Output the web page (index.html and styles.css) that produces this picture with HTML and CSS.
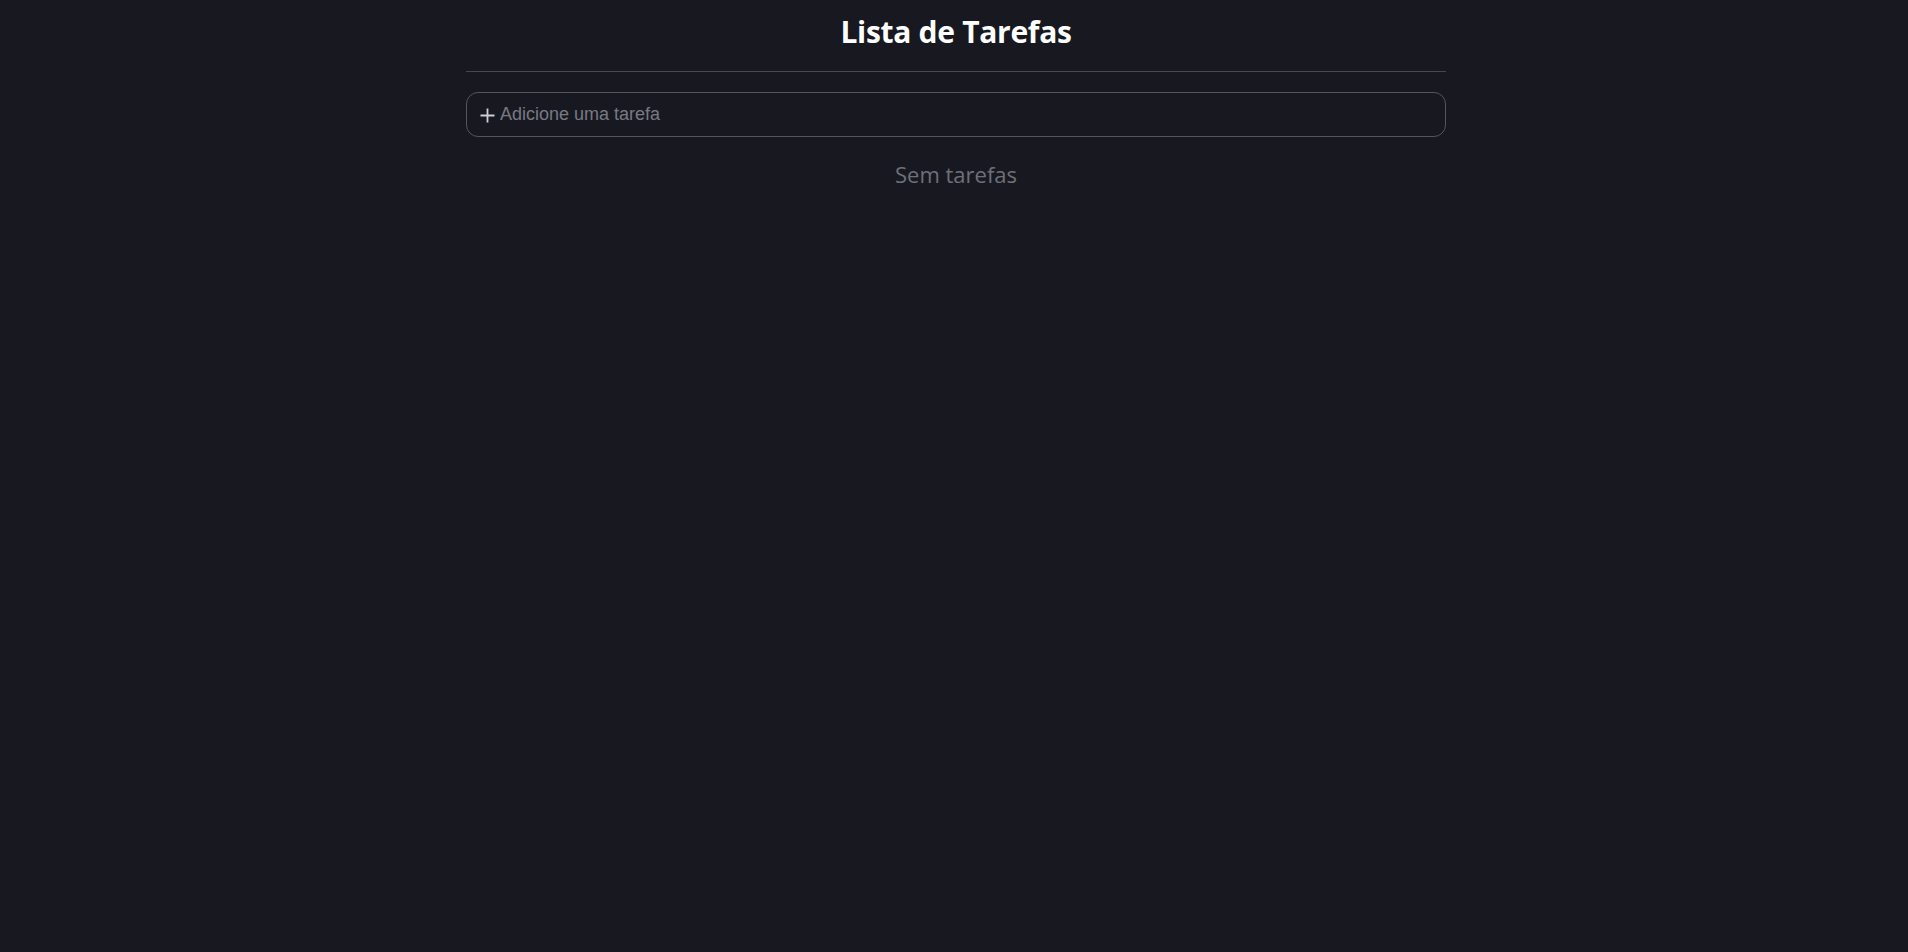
FILE: index.html
```html
<!DOCTYPE html>
<html lang="pt">
<head>
<meta charset="utf-8">
<title>Lista de Tarefas</title>
<link rel="stylesheet" href="styles.css">
</head>
<body>
<main class="app">
  <h1 class="title">Lista de Tarefas</h1>
  <hr class="divider">
  <label class="add">
    <svg class="add-icon" viewBox="0 0 17 17" width="17" height="17" aria-hidden="true"><path d="M8.5 1.5v14M1.5 8.5h14" stroke="#cfcfd3" stroke-width="1.8" fill="none"/></svg>
    <input class="add-input" type="text" placeholder="Adicione uma tarefa">
  </label>
  <p class="empty">Sem tarefas</p>
</main>
</body>
</html>
```
FILE: styles.css
```css
html, body {
  margin: 0;
  padding: 0;
  background: #181920;
  height: 100%;
}
body {
  font-family: "Open Sans", "Noto Sans", sans-serif;
}
.app {
  width: 980px;
  margin: 0 auto;
  padding-left: 4px;
  display: flex;
  flex-direction: column;
}
.title {
  margin: 7px 0 0;
  height: 50px;
  line-height: 50px;
  text-align: center;
  color: #ffffff;
  font-size: 30px;
  font-weight: 700;
  letter-spacing: -0.3px;
}
.divider {
  margin: 14px 0 0;
  border: 0;
  border-top: 1px solid #474850;
  height: 0;
}
.add {
  margin-top: 20px;
  height: 45px;
  box-sizing: border-box;
  border: 1px solid #55565c;
  border-radius: 12px;
  display: flex;
  align-items: center;
  gap: 4px;
  padding: 0 12px;
}
.add-icon {
  flex: none;
  margin-top: 1px;
}
.add-input {
  flex: 1;
  background: transparent;
  border: 0;
  outline: none;
  color: #e6e6e6;
  font-family: "Liberation Sans", Arial, sans-serif;
  font-size: 18px;
  padding: 0;
}
.add-input::placeholder {
  color: #777a84;
}
.empty {
  margin: 22px 0 0;
  text-align: center;
  color: #6d7079;
  font-size: 22px;
  line-height: 30px;
}
```
